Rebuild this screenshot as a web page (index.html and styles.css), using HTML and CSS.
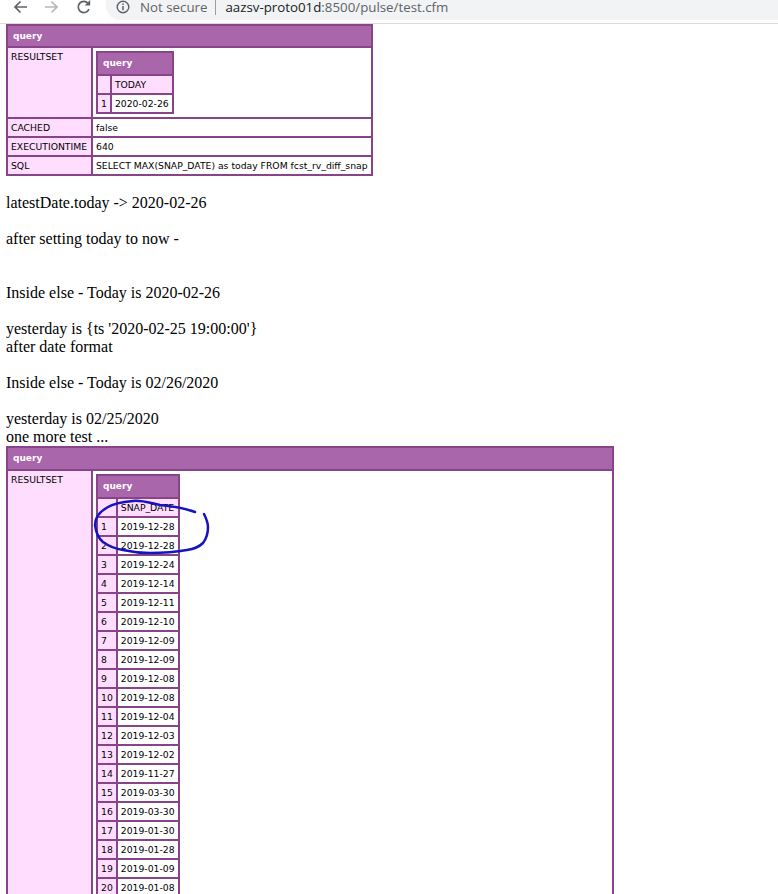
FILE: index.html
```html
<!DOCTYPE html>
<html lang="en">
<head>
  <meta charset="UTF-8" />
  <title>test.cfm</title>
  <link rel="stylesheet" href="styles.css">
</head>
<body>

  <div class="toolbar">
    <div class="nav">
      <svg class="nav-icon" viewBox="0 0 16 16"><path d="M15 7H3.5M8.5 1.5 3 7l5.5 5.5" fill="none" stroke="#5f6368" stroke-width="1.7"/></svg>
      <svg class="nav-icon" viewBox="0 0 16 16"><path d="M1 7h11.5M7.5 1.5 13 7l-5.5 5.5" fill="none" stroke="#b4b6b9" stroke-width="1.7"/></svg>
      <svg class="nav-icon" viewBox="0 0 16 16"><path d="M13 9.2A5.6 5.6 0 1 1 12 3.2" fill="none" stroke="#5f6368" stroke-width="1.7"/><path d="M14.2 0v5.6H8.6z" fill="#5f6368"/></svg>
    </div>
    <div class="address">
      <svg class="info" viewBox="0 0 14 14"><circle cx="7" cy="7" r="5.8" fill="none" stroke="#5f6368" stroke-width="1.4"/><path d="M7 6v4.2M7 3.4v1.5" stroke="#5f6368" stroke-width="1.5"/></svg>
      <span class="secure">Not secure</span>
      <span class="sep"></span>
      <span class="host">aazsv-proto01d</span><span class="path">:8500/pulse/test.cfm</span>
    </div>
  </div>

  <div class="content">
    <table class="dump">
      <tr><th colspan="2">query</th></tr>
      <tr>
        <td class="label key">RESULTSET</td>
        <td class="nest">
          <table class="dump inner">
            <tr><th colspan="2">query</th></tr>
            <tr><td class="label"></td><td class="label">TODAY</td></tr>
            <tr><td class="label">1</td><td>2020-02-26</td></tr>
          </table>
        </td>
      </tr>
      <tr><td class="label">CACHED</td><td>false</td></tr>
      <tr><td class="label">EXECUTIONTIME</td><td>640</td></tr>
      <tr><td class="label">SQL</td><td>SELECT MAX(SNAP_DATE) as today FROM fcst_rv_diff_snap</td></tr>
    </table>

    <br>
    latestDate.today -&gt; 2020-02-26<br>
    <br>
    after setting today to now -<br>
    <br>
    <br>
    Inside else - Today is 2020-02-26<br>
    <br>
    yesterday is {ts '2020-02-25 19:00:00'}<br>
    after date format<br>
    <br>
    Inside else - Today is 02/26/2020<br>
    <br>
    yesterday is 02/25/2020<br>
    one more test ...<br>

    <table class="dump wide">
      <tr><th colspan="2">query</th></tr>
      <tr>
        <td class="label key">RESULTSET</td>
        <td class="nest">
          <table class="dump inner">
            <tr><th colspan="2">query</th></tr>
            <tr><td class="label"></td><td class="label">SNAP_DATE</td></tr>
            <tr><td class="label">1</td><td>2019-12-28</td></tr>
            <tr><td class="label">2</td><td>2019-12-28</td></tr>
            <tr><td class="label">3</td><td>2019-12-24</td></tr>
            <tr><td class="label">4</td><td>2019-12-14</td></tr>
            <tr><td class="label">5</td><td>2019-12-11</td></tr>
            <tr><td class="label">6</td><td>2019-12-10</td></tr>
            <tr><td class="label">7</td><td>2019-12-09</td></tr>
            <tr><td class="label">8</td><td>2019-12-09</td></tr>
            <tr><td class="label">9</td><td>2019-12-08</td></tr>
            <tr><td class="label">10</td><td>2019-12-08</td></tr>
            <tr><td class="label">11</td><td>2019-12-04</td></tr>
            <tr><td class="label">12</td><td>2019-12-03</td></tr>
            <tr><td class="label">13</td><td>2019-12-02</td></tr>
            <tr><td class="label">14</td><td>2019-11-27</td></tr>
            <tr><td class="label">15</td><td>2019-03-30</td></tr>
            <tr><td class="label">16</td><td>2019-03-30</td></tr>
            <tr><td class="label">17</td><td>2019-01-30</td></tr>
            <tr><td class="label">18</td><td>2019-01-28</td></tr>
            <tr><td class="label">19</td><td>2019-01-09</td></tr>
            <tr><td class="label">20</td><td>2019-01-08</td></tr>
          </table>
        </td>
      </tr>
    </table>
  </div>

  <!-- pen mark somebody drew round the first two rows -->
  <svg class="scribble" viewBox="0 0 778 894">
    <path d="M195 512C184 508 170 506 160 505C150 503 142 500 133 501C122 502 114 503 108 507C99 512 95 518 95 525C96 533 98 538 103 542C110 547 116 549 123 550C132 552 141 553 150 553C163 553 176 552 187 550C194 549 199 547 203 543C207 538 208 533 208 527C208 522 206 518 204 514" fill="none" stroke="#1414c0" stroke-width="2.5" stroke-linecap="round"/>
  </svg>

</body>
</html>
```

FILE: styles.css
```css
html, body {
  margin: 0;
  height: 894px;
  overflow: hidden;
}

body {
  position: relative;
  background: white;
  color: black;
  font-family: 'Liberation Serif', serif;
  font-size: 16px;
  line-height: 18px;
}

.toolbar {
  display: flex;
  align-items: flex-start;
  height: 23px;
  border-bottom: 1px solid #dcdcdc;
  font-family: 'Open Sans', sans-serif;
  font-size: 13.3px;
  overflow: hidden;
}

.nav {
  display: flex;
  gap: 16px;
  padding-left: 12px;
  width: 94px;
}

.nav-icon {
  width: 16px;
  height: 16px;
}

.address {
  display: flex;
  align-items: center;
  flex: 1;
  height: 14px;
  padding: 0 0 6px 10px;
  background-color: #f1f3f4;
  border-radius: 0 0 0 14px;
  color: #5f6368;
  line-height: 14px;
}

.info {
  width: 14px;
  height: 14px;
  margin-right: 10px;
}

.sep {
  width: 1px;
  height: 15px;
  margin: 0 9px 0 8px;
  background-color: #9a9da1;
}

.host {
  color: #202124;
}

.content {
  padding-left: 6px;
}

.dump {
  border-collapse: collapse;
  border: 2px solid #884488;
  background-color: white;
  font-family: 'DejaVu Sans', sans-serif;
  font-size: 9.25px;
  line-height: 15px;
}

.dump th {
  height: 20px;
  padding: 0 5px;
  border: 2px solid #884488;
  background-color: #aa66aa;
  color: white;
  font-size: 9px;
  font-weight: bold;
  text-align: left;
}

.dump td {
  padding: 1px 3px;
  border: 2px solid #884488;
  vertical-align: top;
}

.dump td.label {
  background-color: #ffddff;
}

.dump td.nest {
  padding: 3px;
}

.dump td.key {
  width: 77px;
}

.dump .inner th,
.wide > tbody > tr > th {
  height: 21px;
}

.wide {
  width: 608px;
}

.scribble {
  position: absolute;
  top: 0;
  left: 0;
  width: 778px;
  height: 894px;
  pointer-events: none;
}
```
